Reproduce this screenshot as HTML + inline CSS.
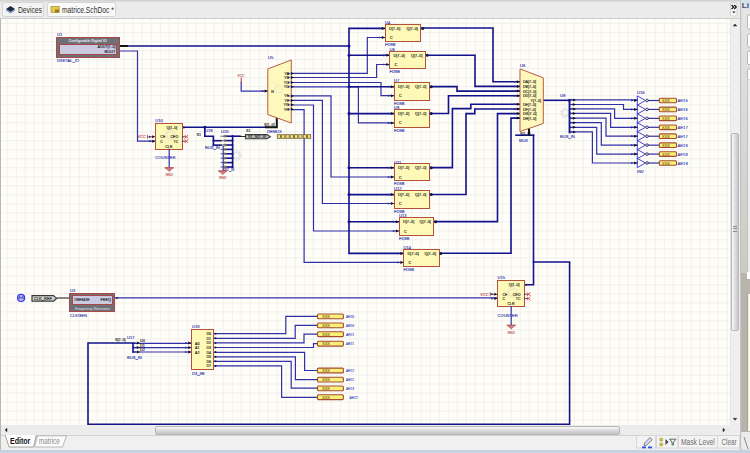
<!DOCTYPE html>
<html><head><meta charset="utf-8">
<style>
html,body{margin:0;padding:0;}
body{width:750px;height:453px;overflow:hidden;position:relative;background:#ececec;font-family:"Liberation Sans",sans-serif;}
.abs{position:absolute;}
.btn{position:absolute;box-sizing:border-box;border:1px solid #cfcfcf;border-radius:2px;background:#f6f6f6;font-size:10.5px;color:#2a2a2a;line-height:12px;}
</style></head><body>
<svg class="abs" style="left:0;top:0" width="740" height="19" viewBox="0 0 740 19" font-family="Liberation Sans, sans-serif">
<rect x="0" y="0" width="740" height="19" fill="#ebebeb"/>
<rect x="0" y="0" width="740" height="1.5" fill="#d2d2d2"/>
<rect x="0" y="18" width="740" height="1" fill="#cdcdcd"/>
<rect x="2.5" y="2.5" width="41" height="14" rx="2" fill="#f3f3f3" stroke="#d4d4d4" stroke-width="1"/>
<path d="M6,9 L10.5,6 L15,9 L10.5,12 Z" fill="#1e2a44"/>
<path d="M6,9 L6,10.5 L10.5,13.5 L15,10.5 L15,9 L10.5,12 Z" fill="#7a96c8"/>
<text x="18" y="12.8" font-size="8.2" fill="#2c2c2c" textLength="24" lengthAdjust="spacingAndGlyphs">Devices</text>
<rect x="47.5" y="2.5" width="68" height="14" rx="2" fill="#fafafa" stroke="#d4d4d4" stroke-width="1"/>
<rect x="51" y="6.5" width="8.2" height="6" fill="#e8c840" stroke="#a08028" stroke-width="0.6"/>
<rect x="55" y="9.5" width="4" height="3" fill="#9a7a20"/>
<text x="62" y="12.8" font-size="8.2" fill="#2c2c2c" textLength="51.8" lengthAdjust="spacingAndGlyphs">matrice.SchDoc *</text>
<rect x="730.5" y="2.5" width="6.5" height="13.5" rx="1.5" fill="#f7f7f7" stroke="#d4d4d4" stroke-width="1"/>
<path d="M731.6,5 L733.6,7 L731.6,9 M734.2,5 L736.2,7 L734.2,9" fill="none" stroke="#111" stroke-width="1.2"/>
<path d="M732.2,11.5 h3.4 l-1.7,1.8 z" fill="#222"/>
</svg>
<svg class="abs" style="left:0;top:0" width="750" height="453" viewBox="0 0 750 453" font-family="Liberation Sans, sans-serif">
<rect x="1" y="19" width="729" height="406" fill="#fffdf8"/>
<rect x="6.75" y="19" width="1.1" height="406" fill="#f2f1ed"/><rect x="15.75" y="19" width="1.1" height="406" fill="#f2f1ed"/><rect x="24.75" y="19" width="1.1" height="406" fill="#f2f1ed"/><rect x="33.75" y="19" width="1.1" height="406" fill="#f2f1ed"/><rect x="42.75" y="19" width="1.1" height="406" fill="#f2f1ed"/><rect x="51.75" y="19" width="1.1" height="406" fill="#f2f1ed"/><rect x="60.75" y="19" width="1.1" height="406" fill="#f2f1ed"/><rect x="69.75" y="19" width="1.1" height="406" fill="#f2f1ed"/><rect x="78.75" y="19" width="1.1" height="406" fill="#f2f1ed"/><rect x="87.75" y="19" width="1.1" height="406" fill="#f2f1ed"/><rect x="96.75" y="19" width="1.1" height="406" fill="#f2f1ed"/><rect x="105.75" y="19" width="1.1" height="406" fill="#f2f1ed"/><rect x="114.75" y="19" width="1.1" height="406" fill="#f2f1ed"/><rect x="123.75" y="19" width="1.1" height="406" fill="#f2f1ed"/><rect x="132.75" y="19" width="1.1" height="406" fill="#f2f1ed"/><rect x="141.75" y="19" width="1.1" height="406" fill="#f2f1ed"/><rect x="150.75" y="19" width="1.1" height="406" fill="#f2f1ed"/><rect x="159.75" y="19" width="1.1" height="406" fill="#f2f1ed"/><rect x="168.75" y="19" width="1.1" height="406" fill="#f2f1ed"/><rect x="177.75" y="19" width="1.1" height="406" fill="#f2f1ed"/><rect x="186.75" y="19" width="1.1" height="406" fill="#f2f1ed"/><rect x="195.75" y="19" width="1.1" height="406" fill="#f2f1ed"/><rect x="204.75" y="19" width="1.1" height="406" fill="#f2f1ed"/><rect x="213.75" y="19" width="1.1" height="406" fill="#f2f1ed"/><rect x="222.75" y="19" width="1.1" height="406" fill="#f2f1ed"/><rect x="231.75" y="19" width="1.1" height="406" fill="#f2f1ed"/><rect x="240.75" y="19" width="1.1" height="406" fill="#f2f1ed"/><rect x="249.75" y="19" width="1.1" height="406" fill="#f2f1ed"/><rect x="258.75" y="19" width="1.1" height="406" fill="#f2f1ed"/><rect x="267.75" y="19" width="1.1" height="406" fill="#f2f1ed"/><rect x="276.75" y="19" width="1.1" height="406" fill="#f2f1ed"/><rect x="285.75" y="19" width="1.1" height="406" fill="#f2f1ed"/><rect x="294.75" y="19" width="1.1" height="406" fill="#f2f1ed"/><rect x="303.75" y="19" width="1.1" height="406" fill="#f2f1ed"/><rect x="312.75" y="19" width="1.1" height="406" fill="#f2f1ed"/><rect x="321.75" y="19" width="1.1" height="406" fill="#f2f1ed"/><rect x="330.75" y="19" width="1.1" height="406" fill="#f2f1ed"/><rect x="339.75" y="19" width="1.1" height="406" fill="#f2f1ed"/><rect x="348.75" y="19" width="1.1" height="406" fill="#f2f1ed"/><rect x="357.75" y="19" width="1.1" height="406" fill="#f2f1ed"/><rect x="366.75" y="19" width="1.1" height="406" fill="#f2f1ed"/><rect x="375.75" y="19" width="1.1" height="406" fill="#f2f1ed"/><rect x="384.75" y="19" width="1.1" height="406" fill="#f2f1ed"/><rect x="393.75" y="19" width="1.1" height="406" fill="#f2f1ed"/><rect x="402.75" y="19" width="1.1" height="406" fill="#f2f1ed"/><rect x="411.75" y="19" width="1.1" height="406" fill="#f2f1ed"/><rect x="420.75" y="19" width="1.1" height="406" fill="#f2f1ed"/><rect x="429.75" y="19" width="1.1" height="406" fill="#f2f1ed"/><rect x="438.75" y="19" width="1.1" height="406" fill="#f2f1ed"/><rect x="447.75" y="19" width="1.1" height="406" fill="#f2f1ed"/><rect x="456.75" y="19" width="1.1" height="406" fill="#f2f1ed"/><rect x="465.75" y="19" width="1.1" height="406" fill="#f2f1ed"/><rect x="474.75" y="19" width="1.1" height="406" fill="#f2f1ed"/><rect x="483.75" y="19" width="1.1" height="406" fill="#f2f1ed"/><rect x="492.75" y="19" width="1.1" height="406" fill="#f2f1ed"/><rect x="501.75" y="19" width="1.1" height="406" fill="#f2f1ed"/><rect x="510.75" y="19" width="1.1" height="406" fill="#f2f1ed"/><rect x="519.75" y="19" width="1.1" height="406" fill="#f2f1ed"/><rect x="528.75" y="19" width="1.1" height="406" fill="#f2f1ed"/><rect x="537.75" y="19" width="1.1" height="406" fill="#f2f1ed"/><rect x="546.75" y="19" width="1.1" height="406" fill="#f2f1ed"/><rect x="555.75" y="19" width="1.1" height="406" fill="#f2f1ed"/><rect x="564.75" y="19" width="1.1" height="406" fill="#f2f1ed"/><rect x="573.75" y="19" width="1.1" height="406" fill="#f2f1ed"/><rect x="582.75" y="19" width="1.1" height="406" fill="#f2f1ed"/><rect x="591.75" y="19" width="1.1" height="406" fill="#f2f1ed"/><rect x="600.75" y="19" width="1.1" height="406" fill="#f2f1ed"/><rect x="609.75" y="19" width="1.1" height="406" fill="#f2f1ed"/><rect x="618.75" y="19" width="1.1" height="406" fill="#f2f1ed"/><rect x="627.75" y="19" width="1.1" height="406" fill="#f2f1ed"/><rect x="636.75" y="19" width="1.1" height="406" fill="#f2f1ed"/><rect x="645.75" y="19" width="1.1" height="406" fill="#f2f1ed"/><rect x="654.75" y="19" width="1.1" height="406" fill="#f2f1ed"/><rect x="663.75" y="19" width="1.1" height="406" fill="#f2f1ed"/><rect x="672.75" y="19" width="1.1" height="406" fill="#f2f1ed"/><rect x="681.75" y="19" width="1.1" height="406" fill="#f2f1ed"/><rect x="690.75" y="19" width="1.1" height="406" fill="#f2f1ed"/><rect x="699.75" y="19" width="1.1" height="406" fill="#f2f1ed"/><rect x="708.75" y="19" width="1.1" height="406" fill="#f2f1ed"/><rect x="717.75" y="19" width="1.1" height="406" fill="#f2f1ed"/><rect x="726.75" y="19" width="1.1" height="406" fill="#f2f1ed"/><rect x="1" y="23.00" width="729" height="1.1" fill="#f2f1ed"/><rect x="1" y="32.01" width="729" height="1.1" fill="#f2f1ed"/><rect x="1" y="41.02" width="729" height="1.1" fill="#f2f1ed"/><rect x="1" y="50.03" width="729" height="1.1" fill="#f2f1ed"/><rect x="1" y="59.04" width="729" height="1.1" fill="#f2f1ed"/><rect x="1" y="68.05" width="729" height="1.1" fill="#f2f1ed"/><rect x="1" y="77.07" width="729" height="1.1" fill="#f2f1ed"/><rect x="1" y="86.08" width="729" height="1.1" fill="#f2f1ed"/><rect x="1" y="95.09" width="729" height="1.1" fill="#f2f1ed"/><rect x="1" y="104.10" width="729" height="1.1" fill="#f2f1ed"/><rect x="1" y="113.11" width="729" height="1.1" fill="#f2f1ed"/><rect x="1" y="122.12" width="729" height="1.1" fill="#f2f1ed"/><rect x="1" y="131.13" width="729" height="1.1" fill="#f2f1ed"/><rect x="1" y="140.14" width="729" height="1.1" fill="#f2f1ed"/><rect x="1" y="149.15" width="729" height="1.1" fill="#f2f1ed"/><rect x="1" y="158.16" width="729" height="1.1" fill="#f2f1ed"/><rect x="1" y="167.18" width="729" height="1.1" fill="#f2f1ed"/><rect x="1" y="176.19" width="729" height="1.1" fill="#f2f1ed"/><rect x="1" y="185.20" width="729" height="1.1" fill="#f2f1ed"/><rect x="1" y="194.21" width="729" height="1.1" fill="#f2f1ed"/><rect x="1" y="203.22" width="729" height="1.1" fill="#f2f1ed"/><rect x="1" y="212.23" width="729" height="1.1" fill="#f2f1ed"/><rect x="1" y="221.24" width="729" height="1.1" fill="#f2f1ed"/><rect x="1" y="230.25" width="729" height="1.1" fill="#f2f1ed"/><rect x="1" y="239.26" width="729" height="1.1" fill="#f2f1ed"/><rect x="1" y="248.27" width="729" height="1.1" fill="#f2f1ed"/><rect x="1" y="257.29" width="729" height="1.1" fill="#f2f1ed"/><rect x="1" y="266.30" width="729" height="1.1" fill="#f2f1ed"/><rect x="1" y="275.31" width="729" height="1.1" fill="#f2f1ed"/><rect x="1" y="284.32" width="729" height="1.1" fill="#f2f1ed"/><rect x="1" y="293.33" width="729" height="1.1" fill="#f2f1ed"/><rect x="1" y="302.34" width="729" height="1.1" fill="#f2f1ed"/><rect x="1" y="311.35" width="729" height="1.1" fill="#f2f1ed"/><rect x="1" y="320.36" width="729" height="1.1" fill="#f2f1ed"/><rect x="1" y="329.37" width="729" height="1.1" fill="#f2f1ed"/><rect x="1" y="338.38" width="729" height="1.1" fill="#f2f1ed"/><rect x="1" y="347.40" width="729" height="1.1" fill="#f2f1ed"/><rect x="1" y="356.41" width="729" height="1.1" fill="#f2f1ed"/><rect x="1" y="365.42" width="729" height="1.1" fill="#f2f1ed"/><rect x="1" y="374.43" width="729" height="1.1" fill="#f2f1ed"/><rect x="1" y="383.44" width="729" height="1.1" fill="#f2f1ed"/><rect x="1" y="392.45" width="729" height="1.1" fill="#f2f1ed"/><rect x="1" y="401.46" width="729" height="1.1" fill="#f2f1ed"/><rect x="1" y="410.47" width="729" height="1.1" fill="#f2f1ed"/><rect x="1" y="419.48" width="729" height="1.1" fill="#f2f1ed"/>
<circle cx="565.5" cy="113" r="4.2" fill="none" stroke="#e2e2de" stroke-width="2.4" stroke-dasharray="1.6 1.1"/><circle cx="565.5" cy="113" r="3.0" fill="none" stroke="#e2e2de" stroke-width="1.2"/><circle cx="236.5" cy="155.5" r="4.2" fill="none" stroke="#e2e2de" stroke-width="2.4" stroke-dasharray="1.6 1.1"/><circle cx="236.5" cy="155.5" r="3.0" fill="none" stroke="#e2e2de" stroke-width="1.2"/><polyline points="119,51 137.5,51 137.5,141.2 155,141.2" fill="none" stroke="#3030a8" stroke-width="1.2" stroke-linejoin="miter" stroke-linecap="square"/><polyline points="241.2,82.5 241.2,91.2 267.5,91.2" fill="none" stroke="#3030a8" stroke-width="1.2" stroke-linejoin="miter" stroke-linecap="square"/><polyline points="291.3,73.4 367.3,73.4 367.3,37.5 385,37.5" fill="none" stroke="#3030a8" stroke-width="1.2" stroke-linejoin="miter" stroke-linecap="square"/><polyline points="291.3,77.5 376.6,77.5 376.6,64.5 389.5,64.5" fill="none" stroke="#3030a8" stroke-width="1.2" stroke-linejoin="miter" stroke-linecap="square"/><polyline points="291.3,82.5 381,82.5 381,95.7 394,95.7" fill="none" stroke="#3030a8" stroke-width="1.2" stroke-linejoin="miter" stroke-linecap="square"/><polyline points="291.3,86.8 358.4,86.8 358.4,122.9 394,122.9" fill="none" stroke="#3030a8" stroke-width="1.2" stroke-linejoin="miter" stroke-linecap="square"/><polyline points="291.3,95.9 331,95.9 331,177 394,177" fill="none" stroke="#3030a8" stroke-width="1.2" stroke-linejoin="miter" stroke-linecap="square"/><polyline points="291.3,100.4 322.4,100.4 322.4,203.5 394,203.5" fill="none" stroke="#3030a8" stroke-width="1.2" stroke-linejoin="miter" stroke-linecap="square"/><polyline points="291.3,105.0 313.5,105.0 313.5,231 399,231" fill="none" stroke="#3030a8" stroke-width="1.2" stroke-linejoin="miter" stroke-linecap="square"/><polyline points="291.3,109.6 304.1,109.6 304.1,262.4 403.6,262.4" fill="none" stroke="#3030a8" stroke-width="1.2" stroke-linejoin="miter" stroke-linecap="square"/><polyline points="57,298 70,298" fill="none" stroke="#141414" stroke-width="1.0" stroke-linejoin="miter" stroke-linecap="square"/><polyline points="115,297.9 497.5,297.9" fill="none" stroke="#3030a8" stroke-width="1.2" stroke-linejoin="miter" stroke-linecap="square"/><polyline points="133,343.3 191.4,343.3" fill="none" stroke="#3030a8" stroke-width="1.2" stroke-linejoin="miter" stroke-linecap="square"/><polyline points="133,347.7 191.4,347.7" fill="none" stroke="#3030a8" stroke-width="1.2" stroke-linejoin="miter" stroke-linecap="square"/><polyline points="133,352 191.4,352" fill="none" stroke="#3030a8" stroke-width="1.2" stroke-linejoin="miter" stroke-linecap="square"/><polyline points="214,333.7 285.8,333.7 285.8,316.4 317.5,316.4" fill="none" stroke="#3030a8" stroke-width="1.2" stroke-linejoin="miter" stroke-linecap="square"/><polyline points="214,338.3 295.2,338.3 295.2,325.4 317.5,325.4" fill="none" stroke="#3030a8" stroke-width="1.2" stroke-linejoin="miter" stroke-linecap="square"/><polyline points="214,342.9 304,342.9 304,334.2 317.5,334.2" fill="none" stroke="#3030a8" stroke-width="1.2" stroke-linejoin="miter" stroke-linecap="square"/><polyline points="214,347.5 313.5,347.5 313.5,343.7 317.5,343.7" fill="none" stroke="#3030a8" stroke-width="1.2" stroke-linejoin="miter" stroke-linecap="square"/><polyline points="214,352.3 304.6,352.3 304.6,370.5 317.5,370.5" fill="none" stroke="#3030a8" stroke-width="1.2" stroke-linejoin="miter" stroke-linecap="square"/><polyline points="214,356.9 295.4,356.9 295.4,379.6 317.5,379.6" fill="none" stroke="#3030a8" stroke-width="1.2" stroke-linejoin="miter" stroke-linecap="square"/><polyline points="214,361.4 291.2,361.4 291.2,388.2 317.5,388.2" fill="none" stroke="#3030a8" stroke-width="1.2" stroke-linejoin="miter" stroke-linecap="square"/><polyline points="214,365.9 281.6,365.9 281.6,397.4 317.5,397.4" fill="none" stroke="#3030a8" stroke-width="1.2" stroke-linejoin="miter" stroke-linecap="square"/><polyline points="569.6,99.9 637.3,99.9" fill="none" stroke="#3030a8" stroke-width="1.2" stroke-linejoin="miter" stroke-linecap="square"/><polyline points="648.5,100.5 659.3,100.5" fill="none" stroke="#3030a8" stroke-width="1.2" stroke-linejoin="miter" stroke-linecap="square"/><polyline points="569.6,104.5 623.5,104.5 623.5,109.43 637.3,109.43" fill="none" stroke="#3030a8" stroke-width="1.2" stroke-linejoin="miter" stroke-linecap="square"/><polyline points="648.5,109.43 659.3,109.43" fill="none" stroke="#3030a8" stroke-width="1.2" stroke-linejoin="miter" stroke-linecap="square"/><polyline points="569.6,108.9 614.6,108.9 614.6,118.36 637.3,118.36" fill="none" stroke="#3030a8" stroke-width="1.2" stroke-linejoin="miter" stroke-linecap="square"/><polyline points="648.5,118.36 659.3,118.36" fill="none" stroke="#3030a8" stroke-width="1.2" stroke-linejoin="miter" stroke-linecap="square"/><polyline points="569.6,113.4 610.6,113.4 610.6,127.28999999999999 637.3,127.28999999999999" fill="none" stroke="#3030a8" stroke-width="1.2" stroke-linejoin="miter" stroke-linecap="square"/><polyline points="648.5,127.28999999999999 659.3,127.28999999999999" fill="none" stroke="#3030a8" stroke-width="1.2" stroke-linejoin="miter" stroke-linecap="square"/><polyline points="569.6,118.2 606,118.2 606,136.22 637.3,136.22" fill="none" stroke="#3030a8" stroke-width="1.2" stroke-linejoin="miter" stroke-linecap="square"/><polyline points="648.5,136.22 659.3,136.22" fill="none" stroke="#3030a8" stroke-width="1.2" stroke-linejoin="miter" stroke-linecap="square"/><polyline points="569.6,122.7 601.3,122.7 601.3,145.15 637.3,145.15" fill="none" stroke="#3030a8" stroke-width="1.2" stroke-linejoin="miter" stroke-linecap="square"/><polyline points="648.5,145.15 659.3,145.15" fill="none" stroke="#3030a8" stroke-width="1.2" stroke-linejoin="miter" stroke-linecap="square"/><polyline points="569.6,127.3 596.7,127.3 596.7,154.07999999999998 637.3,154.07999999999998" fill="none" stroke="#3030a8" stroke-width="1.2" stroke-linejoin="miter" stroke-linecap="square"/><polyline points="648.5,154.07999999999998 659.3,154.07999999999998" fill="none" stroke="#3030a8" stroke-width="1.2" stroke-linejoin="miter" stroke-linecap="square"/><polyline points="569.6,131.9 592.4,131.9 592.4,163.01 637.3,163.01" fill="none" stroke="#3030a8" stroke-width="1.2" stroke-linejoin="miter" stroke-linecap="square"/><polyline points="648.5,163.01 659.3,163.01" fill="none" stroke="#3030a8" stroke-width="1.2" stroke-linejoin="miter" stroke-linecap="square"/><polyline points="516,135.2 533.5,135.2" fill="none" stroke="#12128c" stroke-width="1.6" stroke-linejoin="miter" stroke-linecap="square"/><polyline points="119,46 128.5,46" fill="none" stroke="#141414" stroke-width="2.0" stroke-linejoin="miter" stroke-linecap="butt"/><polyline points="128.5,46 349,46" fill="none" stroke="#12128c" stroke-width="1.6" stroke-linejoin="miter" stroke-linecap="butt"/><polyline points="385,28.4 349,28.4 349,253.4 403.6,253.4" fill="none" stroke="#12128c" stroke-width="1.6" stroke-linejoin="miter" stroke-linecap="square"/><polyline points="349,55.3 389.5,55.3" fill="none" stroke="#12128c" stroke-width="1.6" stroke-linejoin="miter" stroke-linecap="square"/><polyline points="349,86.7 394,86.7" fill="none" stroke="#12128c" stroke-width="1.6" stroke-linejoin="miter" stroke-linecap="square"/><polyline points="349,113.6 394,113.6" fill="none" stroke="#12128c" stroke-width="1.6" stroke-linejoin="miter" stroke-linecap="square"/><polyline points="349,167.7 394,167.7" fill="none" stroke="#12128c" stroke-width="1.6" stroke-linejoin="miter" stroke-linecap="square"/><polyline points="349,194.6 394,194.6" fill="none" stroke="#12128c" stroke-width="1.6" stroke-linejoin="miter" stroke-linecap="square"/><polyline points="349,221.7 399,221.7" fill="none" stroke="#12128c" stroke-width="1.6" stroke-linejoin="miter" stroke-linecap="square"/><circle cx="349" cy="46" r="1.5" fill="#12128c"/><circle cx="349" cy="55.3" r="1.5" fill="#12128c"/><circle cx="349" cy="86.7" r="1.5" fill="#12128c"/><circle cx="349" cy="113.6" r="1.5" fill="#12128c"/><circle cx="349" cy="167.7" r="1.5" fill="#12128c"/><circle cx="349" cy="194.6" r="1.5" fill="#12128c"/><circle cx="349" cy="221.7" r="1.5" fill="#12128c"/><polyline points="421,28.0 493,28.0 493,81.8 520,81.8" fill="none" stroke="#12128c" stroke-width="1.6" stroke-linejoin="miter" stroke-linecap="square"/><polyline points="425.5,55.3 475,55.3 475,86.4 520,86.4" fill="none" stroke="#12128c" stroke-width="1.6" stroke-linejoin="miter" stroke-linecap="square"/><polyline points="430,86.6 457,86.6 457,91.1 520,91.1" fill="none" stroke="#12128c" stroke-width="1.6" stroke-linejoin="miter" stroke-linecap="square"/><polyline points="430,113.5 448.5,113.5 448.5,95.7 520,95.7" fill="none" stroke="#12128c" stroke-width="1.6" stroke-linejoin="miter" stroke-linecap="square"/><polyline points="430,167.6 452.4,167.6 452.4,108.6 470.8,108.6 470.8,104.2 520,104.2" fill="none" stroke="#12128c" stroke-width="1.6" stroke-linejoin="miter" stroke-linecap="square"/><polyline points="430,194.5 466,194.5 466,113.6 474.8,113.6 474.8,109 520,109" fill="none" stroke="#12128c" stroke-width="1.6" stroke-linejoin="miter" stroke-linecap="square"/><polyline points="434,221.6 497.5,221.6 497.5,113.6 520,113.6" fill="none" stroke="#12128c" stroke-width="1.6" stroke-linejoin="miter" stroke-linecap="square"/><polyline points="439,253.2 511,253.2 511,118.1 520,118.1" fill="none" stroke="#12128c" stroke-width="1.6" stroke-linejoin="miter" stroke-linecap="square"/><polyline points="543.3,100.3 569.5,100.3" fill="none" stroke="#12128c" stroke-width="1.6" stroke-linejoin="miter" stroke-linecap="square"/><polyline points="569.5,100 569.5,132.5" fill="none" stroke="#12128c" stroke-width="1.8" stroke-linejoin="miter" stroke-linecap="square"/><circle cx="569.5" cy="100.3" r="1.5" fill="#12128c"/><polyline points="529,123.5 529,135.5" fill="none" stroke="#141414" stroke-width="2.0" stroke-linejoin="miter" stroke-linecap="butt"/><polyline points="533.5,135.2 533.5,284.8 524.5,284.8" fill="none" stroke="#12128c" stroke-width="1.6" stroke-linejoin="miter" stroke-linecap="square"/><polyline points="533.5,262 569.6,262 569.6,424.2 88,424.2 88,343 133,343 133,352" fill="none" stroke="#12128c" stroke-width="1.6" stroke-linejoin="miter" stroke-linecap="square"/><polyline points="182,127.3 266,127.3" fill="none" stroke="#12128c" stroke-width="1.6" stroke-linejoin="miter" stroke-linecap="square"/><polyline points="266,127.3 276.8,127.3 276.8,119" fill="none" stroke="#141414" stroke-width="2.0" stroke-linejoin="miter" stroke-linecap="square"/><circle cx="204.8" cy="127.3" r="1.5" fill="#12128c"/><polyline points="204.8,127.3 204.8,136.2 213.4,136.2 213.4,145.1" fill="none" stroke="#12128c" stroke-width="1.6" stroke-linejoin="miter" stroke-linecap="square"/><polyline points="213.4,140.7 221,140.7" fill="none" stroke="#12128c" stroke-width="1.6" stroke-linejoin="miter" stroke-linecap="square"/><polyline points="213.4,145.1 221,145.1" fill="none" stroke="#12128c" stroke-width="1.6" stroke-linejoin="miter" stroke-linecap="square"/><polyline points="232.6,136.2 232.6,167.4" fill="none" stroke="#12128c" stroke-width="1.6" stroke-linejoin="miter" stroke-linecap="square"/><polyline points="227,136.2 232.6,136.2" fill="none" stroke="#12128c" stroke-width="1.6" stroke-linejoin="miter" stroke-linecap="square"/><polyline points="227,140.6 232.6,140.6" fill="none" stroke="#12128c" stroke-width="1.6" stroke-linejoin="miter" stroke-linecap="square"/><polyline points="227,145.0 232.6,145.0" fill="none" stroke="#12128c" stroke-width="1.6" stroke-linejoin="miter" stroke-linecap="square"/><polyline points="227,149.39999999999998 232.6,149.39999999999998" fill="none" stroke="#12128c" stroke-width="1.6" stroke-linejoin="miter" stroke-linecap="square"/><polyline points="227,153.79999999999998 232.6,153.79999999999998" fill="none" stroke="#12128c" stroke-width="1.6" stroke-linejoin="miter" stroke-linecap="square"/><polyline points="227,158.2 232.6,158.2" fill="none" stroke="#12128c" stroke-width="1.6" stroke-linejoin="miter" stroke-linecap="square"/><polyline points="227,162.6 232.6,162.6" fill="none" stroke="#12128c" stroke-width="1.6" stroke-linejoin="miter" stroke-linecap="square"/><polyline points="227,167.0 232.6,167.0" fill="none" stroke="#12128c" stroke-width="1.6" stroke-linejoin="miter" stroke-linecap="square"/><polyline points="232.6,136.2 240,136.2" fill="none" stroke="#12128c" stroke-width="1.6" stroke-linejoin="miter" stroke-linecap="square"/><rect x="56.5" y="37.5" width="63.0" height="20.0" fill="#6f6f75" stroke="#a84848" stroke-width="1.0" /><rect x="59.5" y="44.5" width="57.0" height="10.0" fill="#cacae0" stroke="#a84848" stroke-width="1.0" /><text x="68.8" y="42.4" font-size="4.0" fill="#dcdce4" stroke="#dcdce4" stroke-width="0.12" text-anchor="start" font-weight="bold" textLength="37.8" lengthAdjust="spacingAndGlyphs">Configurable Digital IO</text><text x="97.6" y="47.8" font-size="4.0" fill="#151520" stroke="#151520" stroke-width="0.12" text-anchor="start" font-weight="normal" textLength="18" lengthAdjust="spacingAndGlyphs">AOUT[7..0]</text><text x="115.5" y="52.6" font-size="4.0" fill="#151520" stroke="#151520" stroke-width="0.12" text-anchor="end" font-weight="normal" >BOUT</text><text x="57" y="36" font-size="4.1" fill="#1e2aa8" stroke="#1e2aa8" stroke-width="0.1" text-anchor="start" font-weight="normal" >U1</text><text x="57" y="61.5" font-size="4.1" fill="#1e2aa8" stroke="#1e2aa8" stroke-width="0.1" text-anchor="start" font-weight="normal" >DIGITAL_IO</text><polygon points="267.8,68.9 291.3,60 291.3,123 267.8,114.6" fill="#fff8bc" stroke="#b85c44" stroke-width="1"/><circle cx="278.5" cy="89" r="3.6" fill="none" stroke="#ede9c6" stroke-width="2.2" stroke-dasharray="1.5 1"/><text x="268" y="58.5" font-size="4.1" fill="#1e2aa8" stroke="#1e2aa8" stroke-width="0.1" text-anchor="start" font-weight="normal" >U5</text><text x="289" y="74.9" font-size="3.8" fill="#141414" stroke="#141414" stroke-width="0.12" text-anchor="end" font-weight="normal" >YA</text><path d="M290.8,71.9 L294,73.4 L290.8,74.9 Z" fill="#101018"/><path d="M287.8,72.30000000000001 L290.4,73.4 L287.8,74.5 Z" fill="#2a2aa8"/><text x="289" y="79.0" font-size="3.8" fill="#141414" stroke="#141414" stroke-width="0.12" text-anchor="end" font-weight="normal" >YB</text><path d="M290.8,76.0 L294,77.5 L290.8,79.0 Z" fill="#101018"/><path d="M287.8,76.4 L290.4,77.5 L287.8,78.6 Z" fill="#2a2aa8"/><text x="289" y="84.0" font-size="3.8" fill="#141414" stroke="#141414" stroke-width="0.12" text-anchor="end" font-weight="normal" >YC</text><path d="M290.8,81.0 L294,82.5 L290.8,84.0 Z" fill="#101018"/><path d="M287.8,81.4 L290.4,82.5 L287.8,83.6 Z" fill="#2a2aa8"/><text x="289" y="88.3" font-size="3.8" fill="#141414" stroke="#141414" stroke-width="0.12" text-anchor="end" font-weight="normal" >YD</text><path d="M290.8,85.3 L294,86.8 L290.8,88.3 Z" fill="#101018"/><path d="M287.8,85.7 L290.4,86.8 L287.8,87.89999999999999 Z" fill="#2a2aa8"/><text x="289" y="97.4" font-size="3.8" fill="#141414" stroke="#141414" stroke-width="0.12" text-anchor="end" font-weight="normal" >YE</text><path d="M290.8,94.4 L294,95.9 L290.8,97.4 Z" fill="#101018"/><path d="M287.8,94.80000000000001 L290.4,95.9 L287.8,97.0 Z" fill="#2a2aa8"/><text x="289" y="101.9" font-size="3.8" fill="#141414" stroke="#141414" stroke-width="0.12" text-anchor="end" font-weight="normal" >YF</text><path d="M290.8,98.9 L294,100.4 L290.8,101.9 Z" fill="#101018"/><path d="M287.8,99.30000000000001 L290.4,100.4 L287.8,101.5 Z" fill="#2a2aa8"/><text x="289" y="106.3" font-size="3.8" fill="#141414" stroke="#141414" stroke-width="0.12" text-anchor="end" font-weight="normal" >YG</text><path d="M290.8,103.3 L294,104.8 L290.8,106.3 Z" fill="#101018"/><path d="M287.8,103.7 L290.4,104.8 L287.8,105.89999999999999 Z" fill="#2a2aa8"/><text x="289" y="110.7" font-size="3.8" fill="#141414" stroke="#141414" stroke-width="0.12" text-anchor="end" font-weight="normal" >YH</text><path d="M290.8,107.7 L294,109.2 L290.8,110.7 Z" fill="#101018"/><path d="M287.8,108.10000000000001 L290.4,109.2 L287.8,110.3 Z" fill="#2a2aa8"/><text x="271" y="92.5" font-size="3.8" fill="#141414" stroke="#141414" stroke-width="0.12" text-anchor="start" font-weight="normal" >G</text><path d="M264.6,89.5 L267.8,91 L264.6,92.5 Z" fill="#101018"/><path d="M261.6,89.9 L264.2,91 L261.6,92.1 Z" fill="#2a2aa8"/><text x="267" y="133" font-size="4.1" fill="#1e2aa8" stroke="#1e2aa8" stroke-width="0.1" text-anchor="start" font-weight="normal" >DEMUX</text><text x="264" y="125.5" font-size="3.6" fill="#141414" stroke="#141414" stroke-width="0.12" text-anchor="start" font-weight="normal" >S[1..0]</text><rect x="385.5" y="24.5" width="35.0" height="17.0" fill="#fff9b8" stroke="#b4503c" stroke-width="1.0" /><text x="389" y="29.9" font-size="3.8" fill="#141414" stroke="#141414" stroke-width="0.12" text-anchor="start" font-weight="normal" >D[7..0]</text><text x="417.9" y="29.9" font-size="3.8" fill="#141414" stroke="#141414" stroke-width="0.12" text-anchor="end" font-weight="normal" >Q[7..0]</text><text x="390" y="39.0" font-size="3.8" fill="#141414" stroke="#141414" stroke-width="0.12" text-anchor="start" font-weight="normal" >C</text><path d="M381.8,26.9 L385,28.4 L381.8,29.9 Z" fill="#101018"/><path d="M378.8,27.299999999999997 L381.4,28.4 L378.8,29.5 Z" fill="#2a2aa8"/><path d="M381.8,36.0 L385,37.5 L381.8,39.0 Z" fill="#101018"/><path d="M378.8,36.4 L381.4,37.5 L378.8,38.6 Z" fill="#2a2aa8"/><circle cx="422.7" cy="28.4" r="1.5" fill="#141450"/><text x="385" y="23.7" font-size="4.1" fill="#1e2aa8" stroke="#1e2aa8" stroke-width="0.1" text-anchor="start" font-weight="normal" >U4</text><text x="385" y="46.3" font-size="4.1" fill="#1e2aa8" stroke="#1e2aa8" stroke-width="0.1" text-anchor="start" font-weight="normal" >FD8B</text><rect x="389.5" y="51.5" width="36.0" height="17.0" fill="#fff9b8" stroke="#b4503c" stroke-width="1.0" /><text x="393.5" y="56.8" font-size="3.8" fill="#141414" stroke="#141414" stroke-width="0.12" text-anchor="start" font-weight="normal" >D[7..0]</text><text x="422.5" y="56.8" font-size="3.8" fill="#141414" stroke="#141414" stroke-width="0.12" text-anchor="end" font-weight="normal" >Q[7..0]</text><text x="394.5" y="66.0" font-size="3.8" fill="#141414" stroke="#141414" stroke-width="0.12" text-anchor="start" font-weight="normal" >C</text><path d="M386.3,53.8 L389.5,55.3 L386.3,56.8 Z" fill="#101018"/><path d="M383.3,54.199999999999996 L385.9,55.3 L383.3,56.4 Z" fill="#2a2aa8"/><path d="M386.3,63.0 L389.5,64.5 L386.3,66.0 Z" fill="#101018"/><path d="M383.3,63.4 L385.9,64.5 L383.3,65.6 Z" fill="#2a2aa8"/><circle cx="427.3" cy="55.3" r="1.5" fill="#141450"/><text x="389.5" y="50.7" font-size="4.1" fill="#1e2aa8" stroke="#1e2aa8" stroke-width="0.1" text-anchor="start" font-weight="normal" >U6</text><text x="389.5" y="73.1" font-size="4.1" fill="#1e2aa8" stroke="#1e2aa8" stroke-width="0.1" text-anchor="start" font-weight="normal" >FD8B</text><rect x="394.5" y="82.5" width="35.0" height="18.0" fill="#fff9b8" stroke="#b4503c" stroke-width="1.0" /><text x="398" y="88.2" font-size="3.8" fill="#141414" stroke="#141414" stroke-width="0.12" text-anchor="start" font-weight="normal" >D[7..0]</text><text x="426.4" y="88.2" font-size="3.8" fill="#141414" stroke="#141414" stroke-width="0.12" text-anchor="end" font-weight="normal" >Q[7..0]</text><text x="399" y="97.2" font-size="3.8" fill="#141414" stroke="#141414" stroke-width="0.12" text-anchor="start" font-weight="normal" >C</text><path d="M390.8,85.2 L394,86.7 L390.8,88.2 Z" fill="#101018"/><path d="M387.8,85.60000000000001 L390.4,86.7 L387.8,87.8 Z" fill="#2a2aa8"/><path d="M390.8,94.2 L394,95.7 L390.8,97.2 Z" fill="#101018"/><path d="M387.8,94.60000000000001 L390.4,95.7 L387.8,96.8 Z" fill="#2a2aa8"/><circle cx="431.2" cy="86.7" r="1.5" fill="#141450"/><text x="394" y="82.2" font-size="4.1" fill="#1e2aa8" stroke="#1e2aa8" stroke-width="0.1" text-anchor="start" font-weight="normal" >U7</text><text x="394" y="104.8" font-size="4.1" fill="#1e2aa8" stroke="#1e2aa8" stroke-width="0.1" text-anchor="start" font-weight="normal" >FD8B</text><rect x="394.5" y="109.5" width="35.0" height="18.0" fill="#fff9b8" stroke="#b4503c" stroke-width="1.0" /><text x="398" y="115.1" font-size="3.8" fill="#141414" stroke="#141414" stroke-width="0.12" text-anchor="start" font-weight="normal" >D[7..0]</text><text x="426.4" y="115.1" font-size="3.8" fill="#141414" stroke="#141414" stroke-width="0.12" text-anchor="end" font-weight="normal" >Q[7..0]</text><text x="399" y="124.4" font-size="3.8" fill="#141414" stroke="#141414" stroke-width="0.12" text-anchor="start" font-weight="normal" >C</text><path d="M390.8,112.1 L394,113.6 L390.8,115.1 Z" fill="#101018"/><path d="M387.8,112.5 L390.4,113.6 L387.8,114.69999999999999 Z" fill="#2a2aa8"/><path d="M390.8,121.4 L394,122.9 L390.8,124.4 Z" fill="#101018"/><path d="M387.8,121.80000000000001 L390.4,122.9 L387.8,124.0 Z" fill="#2a2aa8"/><circle cx="431.2" cy="113.6" r="1.5" fill="#141450"/><text x="394" y="109.3" font-size="4.1" fill="#1e2aa8" stroke="#1e2aa8" stroke-width="0.1" text-anchor="start" font-weight="normal" >U9</text><text x="394" y="131.8" font-size="4.1" fill="#1e2aa8" stroke="#1e2aa8" stroke-width="0.1" text-anchor="start" font-weight="normal" >FD8B</text><rect x="394.5" y="163.5" width="35.0" height="17.0" fill="#fff9b8" stroke="#b4503c" stroke-width="1.0" /><text x="398" y="169.2" font-size="3.8" fill="#141414" stroke="#141414" stroke-width="0.12" text-anchor="start" font-weight="normal" >D[7..0]</text><text x="426.4" y="169.2" font-size="3.8" fill="#141414" stroke="#141414" stroke-width="0.12" text-anchor="end" font-weight="normal" >Q[7..0]</text><text x="399" y="178.5" font-size="3.8" fill="#141414" stroke="#141414" stroke-width="0.12" text-anchor="start" font-weight="normal" >C</text><path d="M390.8,166.2 L394,167.7 L390.8,169.2 Z" fill="#101018"/><path d="M387.8,166.6 L390.4,167.7 L387.8,168.79999999999998 Z" fill="#2a2aa8"/><path d="M390.8,175.5 L394,177 L390.8,178.5 Z" fill="#101018"/><path d="M387.8,175.9 L390.4,177 L387.8,178.1 Z" fill="#2a2aa8"/><circle cx="431.2" cy="167.7" r="1.5" fill="#141450"/><text x="394" y="163.6" font-size="4.1" fill="#1e2aa8" stroke="#1e2aa8" stroke-width="0.1" text-anchor="start" font-weight="normal" >U11</text><text x="394" y="185.3" font-size="4.1" fill="#1e2aa8" stroke="#1e2aa8" stroke-width="0.1" text-anchor="start" font-weight="normal" >FD8B</text><rect x="394.5" y="190.5" width="35.0" height="18.0" fill="#fff9b8" stroke="#b4503c" stroke-width="1.0" /><text x="398" y="196.1" font-size="3.8" fill="#141414" stroke="#141414" stroke-width="0.12" text-anchor="start" font-weight="normal" >D[7..0]</text><text x="426.4" y="196.1" font-size="3.8" fill="#141414" stroke="#141414" stroke-width="0.12" text-anchor="end" font-weight="normal" >Q[7..0]</text><text x="399" y="205.0" font-size="3.8" fill="#141414" stroke="#141414" stroke-width="0.12" text-anchor="start" font-weight="normal" >C</text><path d="M390.8,193.1 L394,194.6 L390.8,196.1 Z" fill="#101018"/><path d="M387.8,193.5 L390.4,194.6 L387.8,195.7 Z" fill="#2a2aa8"/><path d="M390.8,202.0 L394,203.5 L390.8,205.0 Z" fill="#101018"/><path d="M387.8,202.4 L390.4,203.5 L387.8,204.6 Z" fill="#2a2aa8"/><circle cx="431.2" cy="194.6" r="1.5" fill="#141450"/><text x="394" y="190.39999999999998" font-size="4.1" fill="#1e2aa8" stroke="#1e2aa8" stroke-width="0.1" text-anchor="start" font-weight="normal" >U12</text><text x="394" y="212.8" font-size="4.1" fill="#1e2aa8" stroke="#1e2aa8" stroke-width="0.1" text-anchor="start" font-weight="normal" >FD8B</text><rect x="399.5" y="217.5" width="34.0" height="18.0" fill="#fff9b8" stroke="#b4503c" stroke-width="1.0" /><text x="403" y="223.2" font-size="3.8" fill="#141414" stroke="#141414" stroke-width="0.12" text-anchor="start" font-weight="normal" >D[7..0]</text><text x="430.9" y="223.2" font-size="3.8" fill="#141414" stroke="#141414" stroke-width="0.12" text-anchor="end" font-weight="normal" >Q[7..0]</text><text x="404" y="232.5" font-size="3.8" fill="#141414" stroke="#141414" stroke-width="0.12" text-anchor="start" font-weight="normal" >C</text><path d="M395.8,220.2 L399,221.7 L395.8,223.2 Z" fill="#101018"/><path d="M392.8,220.6 L395.4,221.7 L392.8,222.79999999999998 Z" fill="#2a2aa8"/><path d="M395.8,229.5 L399,231 L395.8,232.5 Z" fill="#101018"/><path d="M392.8,229.9 L395.4,231 L392.8,232.1 Z" fill="#2a2aa8"/><circle cx="435.7" cy="221.7" r="1.5" fill="#141450"/><text x="399" y="217.29999999999998" font-size="4.1" fill="#1e2aa8" stroke="#1e2aa8" stroke-width="0.1" text-anchor="start" font-weight="normal" >U13</text><text x="399" y="239.8" font-size="4.1" fill="#1e2aa8" stroke="#1e2aa8" stroke-width="0.1" text-anchor="start" font-weight="normal" >FD8B</text><rect x="403.5" y="249.5" width="36.0" height="17.0" fill="#fff9b8" stroke="#b4503c" stroke-width="1.0" /><text x="407.6" y="254.9" font-size="3.8" fill="#141414" stroke="#141414" stroke-width="0.12" text-anchor="start" font-weight="normal" >D[7..0]</text><text x="436.0" y="254.9" font-size="3.8" fill="#141414" stroke="#141414" stroke-width="0.12" text-anchor="end" font-weight="normal" >Q[7..0]</text><text x="408.6" y="263.9" font-size="3.8" fill="#141414" stroke="#141414" stroke-width="0.12" text-anchor="start" font-weight="normal" >C</text><path d="M400.40000000000003,251.9 L403.6,253.4 L400.40000000000003,254.9 Z" fill="#101018"/><path d="M397.40000000000003,252.3 L400.0,253.4 L397.40000000000003,254.5 Z" fill="#2a2aa8"/><path d="M400.40000000000003,260.9 L403.6,262.4 L400.40000000000003,263.9 Z" fill="#101018"/><path d="M397.40000000000003,261.29999999999995 L400.0,262.4 L397.40000000000003,263.5 Z" fill="#2a2aa8"/><circle cx="440.8" cy="253.4" r="1.5" fill="#141450"/><text x="403.6" y="248.7" font-size="4.1" fill="#1e2aa8" stroke="#1e2aa8" stroke-width="0.1" text-anchor="start" font-weight="normal" >U14</text><text x="403.6" y="270.8" font-size="4.1" fill="#1e2aa8" stroke="#1e2aa8" stroke-width="0.1" text-anchor="start" font-weight="normal" >FD8B</text><polygon points="520,68.9 543.3,77.8 543.3,123.5 520,131.5" fill="#fff8bc" stroke="#b85c44" stroke-width="1"/><text x="520" y="66.5" font-size="4.1" fill="#1e2aa8" stroke="#1e2aa8" stroke-width="0.1" text-anchor="start" font-weight="normal" >U8</text><text x="523" y="83.3" font-size="3.6" fill="#141414" stroke="#141414" stroke-width="0.12" text-anchor="start" font-weight="normal" >DA[7..0]</text><path d="M516.8,80.3 L520,81.8 L516.8,83.3 Z" fill="#101018"/><path d="M513.8,80.7 L516.4,81.8 L513.8,82.89999999999999 Z" fill="#2a2aa8"/><text x="523" y="87.9" font-size="3.6" fill="#141414" stroke="#141414" stroke-width="0.12" text-anchor="start" font-weight="normal" >DB[7..0]</text><path d="M516.8,84.9 L520,86.4 L516.8,87.9 Z" fill="#101018"/><path d="M513.8,85.30000000000001 L516.4,86.4 L513.8,87.5 Z" fill="#2a2aa8"/><text x="523" y="92.6" font-size="3.6" fill="#141414" stroke="#141414" stroke-width="0.12" text-anchor="start" font-weight="normal" >DC[7..0]</text><path d="M516.8,89.6 L520,91.1 L516.8,92.6 Z" fill="#101018"/><path d="M513.8,90.0 L516.4,91.1 L513.8,92.19999999999999 Z" fill="#2a2aa8"/><text x="523" y="97.2" font-size="3.6" fill="#141414" stroke="#141414" stroke-width="0.12" text-anchor="start" font-weight="normal" >DD[7..0]</text><path d="M516.8,94.2 L520,95.7 L516.8,97.2 Z" fill="#101018"/><path d="M513.8,94.60000000000001 L516.4,95.7 L513.8,96.8 Z" fill="#2a2aa8"/><text x="523" y="105.7" font-size="3.6" fill="#141414" stroke="#141414" stroke-width="0.12" text-anchor="start" font-weight="normal" >DE[7..0]</text><path d="M516.8,102.7 L520,104.2 L516.8,105.7 Z" fill="#101018"/><path d="M513.8,103.10000000000001 L516.4,104.2 L513.8,105.3 Z" fill="#2a2aa8"/><text x="523" y="110.5" font-size="3.6" fill="#141414" stroke="#141414" stroke-width="0.12" text-anchor="start" font-weight="normal" >DF[7..0]</text><path d="M516.8,107.5 L520,109 L516.8,110.5 Z" fill="#101018"/><path d="M513.8,107.9 L516.4,109 L513.8,110.1 Z" fill="#2a2aa8"/><text x="523" y="115.1" font-size="3.6" fill="#141414" stroke="#141414" stroke-width="0.12" text-anchor="start" font-weight="normal" >DG[7..0]</text><path d="M516.8,112.1 L520,113.6 L516.8,115.1 Z" fill="#101018"/><path d="M513.8,112.5 L516.4,113.6 L513.8,114.69999999999999 Z" fill="#2a2aa8"/><text x="523" y="119.6" font-size="3.6" fill="#141414" stroke="#141414" stroke-width="0.12" text-anchor="start" font-weight="normal" >DH[7..0]</text><path d="M516.8,116.6 L520,118.1 L516.8,119.6 Z" fill="#101018"/><path d="M513.8,117.0 L516.4,118.1 L513.8,119.19999999999999 Z" fill="#2a2aa8"/><text x="541" y="101.8" font-size="3.6" fill="#141414" stroke="#141414" stroke-width="0.12" text-anchor="end" font-weight="normal" >Y[7..0]</text><text x="519" y="142" font-size="4.1" fill="#1e2aa8" stroke="#1e2aa8" stroke-width="0.1" text-anchor="start" font-weight="normal" >MUX</text><text x="520" y="134.5" font-size="3.6" fill="#141414" stroke="#141414" stroke-width="0.12" text-anchor="start" font-weight="normal" >S[1..0]</text><text x="560" y="97" font-size="4.1" fill="#1e2aa8" stroke="#1e2aa8" stroke-width="0.1" text-anchor="start" font-weight="normal" >U9</text><text x="560" y="137.5" font-size="4.1" fill="#1e2aa8" stroke="#1e2aa8" stroke-width="0.1" text-anchor="start" font-weight="normal" >BUS_IN</text><path d="M572.8,98.4 L576,99.9 L572.8,101.4 Z" fill="#101018"/><path d="M569.8,98.80000000000001 L572.4,99.9 L569.8,101.0 Z" fill="#2a2aa8"/><path d="M572.8,103.0 L576,104.5 L572.8,106.0 Z" fill="#101018"/><path d="M569.8,103.4 L572.4,104.5 L569.8,105.6 Z" fill="#2a2aa8"/><path d="M572.8,107.4 L576,108.9 L572.8,110.4 Z" fill="#101018"/><path d="M569.8,107.80000000000001 L572.4,108.9 L569.8,110.0 Z" fill="#2a2aa8"/><path d="M572.8,111.9 L576,113.4 L572.8,114.9 Z" fill="#101018"/><path d="M569.8,112.30000000000001 L572.4,113.4 L569.8,114.5 Z" fill="#2a2aa8"/><path d="M572.8,116.7 L576,118.2 L572.8,119.7 Z" fill="#101018"/><path d="M569.8,117.10000000000001 L572.4,118.2 L569.8,119.3 Z" fill="#2a2aa8"/><path d="M572.8,121.2 L576,122.7 L572.8,124.2 Z" fill="#101018"/><path d="M569.8,121.60000000000001 L572.4,122.7 L569.8,123.8 Z" fill="#2a2aa8"/><path d="M572.8,125.8 L576,127.3 L572.8,128.8 Z" fill="#101018"/><path d="M569.8,126.2 L572.4,127.3 L569.8,128.4 Z" fill="#2a2aa8"/><path d="M572.8,130.4 L576,131.9 L572.8,133.4 Z" fill="#101018"/><path d="M569.8,130.8 L572.4,131.9 L569.8,133.0 Z" fill="#2a2aa8"/><text x="637" y="94" font-size="4.1" fill="#1e2aa8" stroke="#1e2aa8" stroke-width="0.1" text-anchor="start" font-weight="normal" >U16</text><text x="637" y="172.5" font-size="4.1" fill="#1e2aa8" stroke="#1e2aa8" stroke-width="0.1" text-anchor="start" font-weight="normal" >INV</text><polygon points="637.3,95.9 645.5,100.5 637.3,105.1" fill="none" stroke="#3030d0" stroke-width="0.9"/><circle cx="647" cy="100.5" r="1.3" fill="none" stroke="#202040" stroke-width="0.8"/><path d="M634.0999999999999,99.0 L637.3,100.5 L634.0999999999999,102.0 Z" fill="#101018"/><path d="M631.0999999999999,99.4 L633.6999999999999,100.5 L631.0999999999999,101.6 Z" fill="#2a2aa8"/><rect x="659.3" y="98.2" width="17.2" height="4.6" rx="1" fill="#f9f07a" stroke="#a44c2e" stroke-width="1.1"/><text x="666" y="102.0" font-size="4.0" fill="#8a5a20" stroke="#8a5a20" stroke-width="0.12" text-anchor="middle" font-weight="normal" >XXX</text><text x="677.5" y="102.1" font-size="4.2" fill="#3444bc" stroke="#3444bc" stroke-width="0.12" text-anchor="start" font-weight="normal" >AE15</text><polygon points="637.3,104.83000000000001 645.5,109.43 637.3,114.03" fill="none" stroke="#3030d0" stroke-width="0.9"/><circle cx="647" cy="109.43" r="1.3" fill="none" stroke="#202040" stroke-width="0.8"/><path d="M634.0999999999999,107.93 L637.3,109.43 L634.0999999999999,110.93 Z" fill="#101018"/><path d="M631.0999999999999,108.33000000000001 L633.6999999999999,109.43 L631.0999999999999,110.53 Z" fill="#2a2aa8"/><rect x="659.3" y="107.13000000000001" width="17.2" height="4.6" rx="1" fill="#f9f07a" stroke="#a44c2e" stroke-width="1.1"/><text x="666" y="110.93" font-size="4.0" fill="#8a5a20" stroke="#8a5a20" stroke-width="0.12" text-anchor="middle" font-weight="normal" >XXX</text><text x="677.5" y="111.03" font-size="4.2" fill="#3444bc" stroke="#3444bc" stroke-width="0.12" text-anchor="start" font-weight="normal" >AE16</text><polygon points="637.3,113.76 645.5,118.36 637.3,122.96" fill="none" stroke="#3030d0" stroke-width="0.9"/><circle cx="647" cy="118.36" r="1.3" fill="none" stroke="#202040" stroke-width="0.8"/><path d="M634.0999999999999,116.86 L637.3,118.36 L634.0999999999999,119.86 Z" fill="#101018"/><path d="M631.0999999999999,117.26 L633.6999999999999,118.36 L631.0999999999999,119.46 Z" fill="#2a2aa8"/><rect x="659.3" y="116.06" width="17.2" height="4.6" rx="1" fill="#f9f07a" stroke="#a44c2e" stroke-width="1.1"/><text x="666" y="119.86" font-size="4.0" fill="#8a5a20" stroke="#8a5a20" stroke-width="0.12" text-anchor="middle" font-weight="normal" >XXX</text><text x="677.5" y="119.96" font-size="4.2" fill="#3444bc" stroke="#3444bc" stroke-width="0.12" text-anchor="start" font-weight="normal" >AE16</text><polygon points="637.3,122.69 645.5,127.28999999999999 637.3,131.89" fill="none" stroke="#3030d0" stroke-width="0.9"/><circle cx="647" cy="127.28999999999999" r="1.3" fill="none" stroke="#202040" stroke-width="0.8"/><path d="M634.0999999999999,125.78999999999999 L637.3,127.28999999999999 L634.0999999999999,128.79 Z" fill="#101018"/><path d="M631.0999999999999,126.19 L633.6999999999999,127.28999999999999 L631.0999999999999,128.39 Z" fill="#2a2aa8"/><rect x="659.3" y="124.99" width="17.2" height="4.6" rx="1" fill="#f9f07a" stroke="#a44c2e" stroke-width="1.1"/><text x="666" y="128.79" font-size="4.0" fill="#8a5a20" stroke="#8a5a20" stroke-width="0.12" text-anchor="middle" font-weight="normal" >XXX</text><text x="677.5" y="128.89" font-size="4.2" fill="#3444bc" stroke="#3444bc" stroke-width="0.12" text-anchor="start" font-weight="normal" >AE17</text><polygon points="637.3,131.62 645.5,136.22 637.3,140.82" fill="none" stroke="#3030d0" stroke-width="0.9"/><circle cx="647" cy="136.22" r="1.3" fill="none" stroke="#202040" stroke-width="0.8"/><path d="M634.0999999999999,134.72 L637.3,136.22 L634.0999999999999,137.72 Z" fill="#101018"/><path d="M631.0999999999999,135.12 L633.6999999999999,136.22 L631.0999999999999,137.32 Z" fill="#2a2aa8"/><rect x="659.3" y="133.92" width="17.2" height="4.6" rx="1" fill="#f9f07a" stroke="#a44c2e" stroke-width="1.1"/><text x="666" y="137.72" font-size="4.0" fill="#8a5a20" stroke="#8a5a20" stroke-width="0.12" text-anchor="middle" font-weight="normal" >XXX</text><text x="677.5" y="137.82" font-size="4.2" fill="#3444bc" stroke="#3444bc" stroke-width="0.12" text-anchor="start" font-weight="normal" >AE17</text><polygon points="637.3,140.55 645.5,145.15 637.3,149.75" fill="none" stroke="#3030d0" stroke-width="0.9"/><circle cx="647" cy="145.15" r="1.3" fill="none" stroke="#202040" stroke-width="0.8"/><path d="M634.0999999999999,143.65 L637.3,145.15 L634.0999999999999,146.65 Z" fill="#101018"/><path d="M631.0999999999999,144.05 L633.6999999999999,145.15 L631.0999999999999,146.25 Z" fill="#2a2aa8"/><rect x="659.3" y="142.85" width="17.2" height="4.6" rx="1" fill="#f9f07a" stroke="#a44c2e" stroke-width="1.1"/><text x="666" y="146.65" font-size="4.0" fill="#8a5a20" stroke="#8a5a20" stroke-width="0.12" text-anchor="middle" font-weight="normal" >XXX</text><text x="677.5" y="146.75" font-size="4.2" fill="#3444bc" stroke="#3444bc" stroke-width="0.12" text-anchor="start" font-weight="normal" >AE18</text><polygon points="637.3,149.48 645.5,154.07999999999998 637.3,158.67999999999998" fill="none" stroke="#3030d0" stroke-width="0.9"/><circle cx="647" cy="154.07999999999998" r="1.3" fill="none" stroke="#202040" stroke-width="0.8"/><path d="M634.0999999999999,152.57999999999998 L637.3,154.07999999999998 L634.0999999999999,155.57999999999998 Z" fill="#101018"/><path d="M631.0999999999999,152.98 L633.6999999999999,154.07999999999998 L631.0999999999999,155.17999999999998 Z" fill="#2a2aa8"/><rect x="659.3" y="151.77999999999997" width="17.2" height="4.6" rx="1" fill="#f9f07a" stroke="#a44c2e" stroke-width="1.1"/><text x="666" y="155.57999999999998" font-size="4.0" fill="#8a5a20" stroke="#8a5a20" stroke-width="0.12" text-anchor="middle" font-weight="normal" >XXX</text><text x="677.5" y="155.67999999999998" font-size="4.2" fill="#3444bc" stroke="#3444bc" stroke-width="0.12" text-anchor="start" font-weight="normal" >AF19</text><polygon points="637.3,158.41 645.5,163.01 637.3,167.60999999999999" fill="none" stroke="#3030d0" stroke-width="0.9"/><circle cx="647" cy="163.01" r="1.3" fill="none" stroke="#202040" stroke-width="0.8"/><path d="M634.0999999999999,161.51 L637.3,163.01 L634.0999999999999,164.51 Z" fill="#101018"/><path d="M631.0999999999999,161.91 L633.6999999999999,163.01 L631.0999999999999,164.10999999999999 Z" fill="#2a2aa8"/><rect x="659.3" y="160.70999999999998" width="17.2" height="4.6" rx="1" fill="#f9f07a" stroke="#a44c2e" stroke-width="1.1"/><text x="666" y="164.51" font-size="4.0" fill="#8a5a20" stroke="#8a5a20" stroke-width="0.12" text-anchor="middle" font-weight="normal" >XXX</text><text x="677.5" y="164.60999999999999" font-size="4.2" fill="#3444bc" stroke="#3444bc" stroke-width="0.12" text-anchor="start" font-weight="normal" >AE19</text><rect x="155.5" y="123.5" width="27.0" height="26.0" fill="#fff9b8" stroke="#b4503c" stroke-width="1.0" /><circle cx="170.3" cy="135" r="4.5" fill="none" stroke="#ede9c6" stroke-width="2.4" stroke-dasharray="1.6 1.1"/><circle cx="170.3" cy="135" r="3.3" fill="none" stroke="#ede9c6" stroke-width="1.2"/><text x="177.3" y="128.8" font-size="3.6" fill="#141414" stroke="#141414" stroke-width="0.12" text-anchor="end" font-weight="normal" >Q[1..0]</text><text x="160.3" y="138.2" font-size="3.6" fill="#141414" stroke="#141414" stroke-width="0.12" text-anchor="start" font-weight="normal" >CE</text><text x="160.3" y="142.6" font-size="3.6" fill="#141414" stroke="#141414" stroke-width="0.12" text-anchor="start" font-weight="normal" >C</text><text x="178.3" y="138.2" font-size="3.6" fill="#141414" stroke="#141414" stroke-width="0.12" text-anchor="end" font-weight="normal" >CEO</text><text x="178.3" y="142.6" font-size="3.6" fill="#141414" stroke="#141414" stroke-width="0.12" text-anchor="end" font-weight="normal" >TC</text><text x="168.8" y="148" font-size="3.6" fill="#141414" stroke="#141414" stroke-width="0.12" text-anchor="middle" font-weight="normal" >CLR</text><text x="155.3" y="121.5" font-size="4.1" fill="#1e2aa8" stroke="#1e2aa8" stroke-width="0.1" text-anchor="start" font-weight="normal" >U10</text><text x="155.3" y="159.2" font-size="4.1" fill="#1e2aa8" stroke="#1e2aa8" stroke-width="0.1" text-anchor="start" font-weight="normal" >COUNTER</text><text x="137.5" y="138.3" font-size="4.2" fill="#b84a4a" stroke="#b84a4a" stroke-width="0.12" text-anchor="start" font-weight="normal" textLength="8.2" lengthAdjust="spacingAndGlyphs">VCC</text><polyline points="147.5,135.3 147.5,138.3" fill="none" stroke="#b84a4a" stroke-width="0.9" stroke-linejoin="miter" stroke-linecap="square"/><polyline points="147.5,136.8 152.3,136.8" fill="none" stroke="#b84a4a" stroke-width="0.9" stroke-linejoin="miter" stroke-linecap="square"/><path d="M152.10000000000002,135.3 L155.3,136.8 L152.10000000000002,138.3 Z" fill="#101018"/><path d="M149.10000000000002,135.70000000000002 L151.70000000000002,136.8 L149.10000000000002,137.9 Z" fill="#2a2aa8"/><path d="M152.10000000000002,139.7 L155.3,141.2 L152.10000000000002,142.7 Z" fill="#101018"/><path d="M149.10000000000002,140.1 L151.70000000000002,141.2 L149.10000000000002,142.29999999999998 Z" fill="#2a2aa8"/><path d="M184.8,135.0 l3.4,3.6 M184.8,138.60000000000002 l3.4,-3.6" stroke="#e82828" stroke-width="0.8"/><polyline points="182.3,136.8 185.3,136.8" fill="none" stroke="#202040" stroke-width="0.8" stroke-linejoin="miter" stroke-linecap="square"/><path d="M184.8,139.39999999999998 l3.4,3.6 M184.8,143.0 l3.4,-3.6" stroke="#e82828" stroke-width="0.8"/><polyline points="182.3,141.2 185.3,141.2" fill="none" stroke="#202040" stroke-width="0.8" stroke-linejoin="miter" stroke-linecap="square"/><polyline points="169.2,149.3 169.2,167.8" fill="none" stroke="#3030a8" stroke-width="1.2" stroke-linejoin="miter" stroke-linecap="square"/><path d="M164.7,167.8 h9" stroke="#b84a4a" stroke-width="1.1"/><path d="M165.2,167.8 L169.2,171.4 L173.2,167.8 Z" fill="#c88080" stroke="#b84a4a" stroke-width="0.6"/><text x="169.2" y="176.0" font-size="4.0" fill="#b84a4a" stroke="#b84a4a" stroke-width="0.12" text-anchor="middle" font-weight="normal" textLength="7.4" lengthAdjust="spacingAndGlyphs">GND</text><circle cx="183.8" cy="127.4" r="1.0" fill="#1a1a60"/><rect x="497.5" y="280.5" width="27.0" height="26.0" fill="#fff9b8" stroke="#b4503c" stroke-width="1.0" /><circle cx="512.5" cy="292.4" r="4.5" fill="none" stroke="#ede9c6" stroke-width="2.4" stroke-dasharray="1.6 1.1"/><circle cx="512.5" cy="292.4" r="3.3" fill="none" stroke="#ede9c6" stroke-width="1.2"/><text x="519.5" y="286.2" font-size="3.6" fill="#141414" stroke="#141414" stroke-width="0.12" text-anchor="end" font-weight="normal" >Q[1..0]</text><text x="502.5" y="295.59999999999997" font-size="3.6" fill="#141414" stroke="#141414" stroke-width="0.12" text-anchor="start" font-weight="normal" >CE</text><text x="502.5" y="300.0" font-size="3.6" fill="#141414" stroke="#141414" stroke-width="0.12" text-anchor="start" font-weight="normal" >C</text><text x="520.5" y="295.59999999999997" font-size="3.6" fill="#141414" stroke="#141414" stroke-width="0.12" text-anchor="end" font-weight="normal" >CEO</text><text x="520.5" y="300.0" font-size="3.6" fill="#141414" stroke="#141414" stroke-width="0.12" text-anchor="end" font-weight="normal" >TC</text><text x="511.0" y="305.4" font-size="3.6" fill="#141414" stroke="#141414" stroke-width="0.12" text-anchor="middle" font-weight="normal" >CLR</text><text x="497.5" y="278.9" font-size="4.1" fill="#1e2aa8" stroke="#1e2aa8" stroke-width="0.1" text-anchor="start" font-weight="normal" >U15</text><text x="497.5" y="316.59999999999997" font-size="4.1" fill="#1e2aa8" stroke="#1e2aa8" stroke-width="0.1" text-anchor="start" font-weight="normal" >COUNTER</text><text x="480.3" y="295.7" font-size="4.2" fill="#b84a4a" stroke="#b84a4a" stroke-width="0.12" text-anchor="start" font-weight="normal" textLength="8.2" lengthAdjust="spacingAndGlyphs">VCC</text><polyline points="490.3,292.7 490.3,295.7" fill="none" stroke="#b84a4a" stroke-width="0.9" stroke-linejoin="miter" stroke-linecap="square"/><polyline points="490.3,294.2 494.5,294.2" fill="none" stroke="#b84a4a" stroke-width="0.9" stroke-linejoin="miter" stroke-linecap="square"/><path d="M494.3,292.7 L497.5,294.2 L494.3,295.7 Z" fill="#101018"/><path d="M491.3,293.09999999999997 L493.9,294.2 L491.3,295.3 Z" fill="#2a2aa8"/><path d="M494.3,297.09999999999997 L497.5,298.59999999999997 L494.3,300.09999999999997 Z" fill="#101018"/><path d="M491.3,297.49999999999994 L493.9,298.59999999999997 L491.3,299.7 Z" fill="#2a2aa8"/><path d="M527.0,292.4 l3.4,3.6 M527.0,296.0 l3.4,-3.6" stroke="#e82828" stroke-width="0.8"/><polyline points="524.5,294.2 527.5,294.2" fill="none" stroke="#202040" stroke-width="0.8" stroke-linejoin="miter" stroke-linecap="square"/><path d="M527.0,296.79999999999995 l3.4,3.6 M527.0,300.4 l3.4,-3.6" stroke="#e82828" stroke-width="0.8"/><polyline points="524.5,298.59999999999997 527.5,298.59999999999997" fill="none" stroke="#202040" stroke-width="0.8" stroke-linejoin="miter" stroke-linecap="square"/><polyline points="511.2,306.7 511.2,325.3" fill="none" stroke="#3030a8" stroke-width="1.2" stroke-linejoin="miter" stroke-linecap="square"/><path d="M506.7,325.3 h9" stroke="#b84a4a" stroke-width="1.1"/><path d="M507.2,325.3 L511.2,328.90000000000003 L515.2,325.3 Z" fill="#c88080" stroke="#b84a4a" stroke-width="0.6"/><text x="511.2" y="333.5" font-size="4.0" fill="#b84a4a" stroke="#b84a4a" stroke-width="0.12" text-anchor="middle" font-weight="normal" textLength="7.4" lengthAdjust="spacingAndGlyphs">GND</text><circle cx="526.0" cy="284.79999999999995" r="1.0" fill="#1a1a60"/><text x="205" y="132" font-size="4.1" fill="#1e2aa8" stroke="#1e2aa8" stroke-width="0.1" text-anchor="start" font-weight="normal" >U19</text><text x="221" y="133" font-size="4.1" fill="#1e2aa8" stroke="#1e2aa8" stroke-width="0.1" text-anchor="start" font-weight="normal" >U20</text><text x="196.5" y="135.5" font-size="3.8" fill="#141414" stroke="#141414" stroke-width="0.12" text-anchor="start" font-weight="normal" >S1</text><text x="205" y="148.5" font-size="4.1" fill="#1e2aa8" stroke="#1e2aa8" stroke-width="0.1" text-anchor="start" font-weight="normal" >BUS_IN</text><text x="224" y="171" font-size="4.1" fill="#1e2aa8" stroke="#1e2aa8" stroke-width="0.1" text-anchor="start" font-weight="normal" >S1_N</text><circle cx="225" cy="136.2" r="1" fill="none" stroke="#404040" stroke-width="0.6"/><polyline points="221,136.2 227,136.2" fill="none" stroke="#404040" stroke-width="0.8" stroke-linejoin="miter" stroke-linecap="square"/><circle cx="225" cy="140.6" r="1" fill="none" stroke="#404040" stroke-width="0.6"/><polyline points="221,140.6 227,140.6" fill="none" stroke="#404040" stroke-width="0.8" stroke-linejoin="miter" stroke-linecap="square"/><circle cx="225" cy="145.0" r="1" fill="none" stroke="#404040" stroke-width="0.6"/><polyline points="221,145.0 227,145.0" fill="none" stroke="#404040" stroke-width="0.8" stroke-linejoin="miter" stroke-linecap="square"/><circle cx="225" cy="149.39999999999998" r="1" fill="none" stroke="#404040" stroke-width="0.6"/><polyline points="221,149.39999999999998 227,149.39999999999998" fill="none" stroke="#404040" stroke-width="0.8" stroke-linejoin="miter" stroke-linecap="square"/><circle cx="225" cy="153.79999999999998" r="1" fill="none" stroke="#404040" stroke-width="0.6"/><polyline points="221,153.79999999999998 227,153.79999999999998" fill="none" stroke="#404040" stroke-width="0.8" stroke-linejoin="miter" stroke-linecap="square"/><circle cx="225" cy="158.2" r="1" fill="none" stroke="#404040" stroke-width="0.6"/><polyline points="221,158.2 227,158.2" fill="none" stroke="#404040" stroke-width="0.8" stroke-linejoin="miter" stroke-linecap="square"/><circle cx="225" cy="162.6" r="1" fill="none" stroke="#404040" stroke-width="0.6"/><polyline points="221,162.6 227,162.6" fill="none" stroke="#404040" stroke-width="0.8" stroke-linejoin="miter" stroke-linecap="square"/><circle cx="225" cy="167.0" r="1" fill="none" stroke="#404040" stroke-width="0.6"/><polyline points="221,167.0 227,167.0" fill="none" stroke="#404040" stroke-width="0.8" stroke-linejoin="miter" stroke-linecap="square"/><polyline points="223.2,146 223.2,171" fill="none" stroke="#3030a8" stroke-width="1.2" stroke-linejoin="miter" stroke-linecap="square"/><path d="M218.2,171 h9" stroke="#b84a4a" stroke-width="1.1"/><path d="M218.7,171 L222.7,174.6 L226.7,171 Z" fill="#c88080" stroke="#b84a4a" stroke-width="0.6"/><text x="222.7" y="179.3" font-size="4.0" fill="#b84a4a" stroke="#b84a4a" stroke-width="0.12" text-anchor="middle" font-weight="normal" textLength="7.4" lengthAdjust="spacingAndGlyphs">GND</text><polygon points="245.5,134.6 267,134.6 270.3,136.7 267,138.8 245.5,138.8" fill="#c4c4c4" stroke="#3a3a3a" stroke-width="1.1"/><text x="248" y="138" font-size="3.4" fill="#1a1a1a" stroke="#1a1a1a" stroke-width="0.12" text-anchor="start" font-weight="normal" textLength="18" lengthAdjust="spacingAndGlyphs">S1_N[7..0]</text><polyline points="240,136.5 245.2,136.5" fill="none" stroke="#141414" stroke-width="0.9" stroke-linejoin="miter" stroke-linecap="square"/><text x="246" y="131.5" font-size="3.6" fill="#141414" stroke="#141414" stroke-width="0.12" text-anchor="start" font-weight="normal" >S1</text><rect x="277.3" y="134.7" width="3.3" height="3.6" fill="#f4e478" stroke="#6a5828" stroke-width="0.8"/><rect x="281.6" y="134.7" width="3.3" height="3.6" fill="#f4e478" stroke="#6a5828" stroke-width="0.8"/><rect x="285.90000000000003" y="134.7" width="3.3" height="3.6" fill="#f4e478" stroke="#6a5828" stroke-width="0.8"/><rect x="290.2" y="134.7" width="3.3" height="3.6" fill="#f4e478" stroke="#6a5828" stroke-width="0.8"/><rect x="294.5" y="134.7" width="3.3" height="3.6" fill="#f4e478" stroke="#6a5828" stroke-width="0.8"/><rect x="298.8" y="134.7" width="3.3" height="3.6" fill="#f4e478" stroke="#6a5828" stroke-width="0.8"/><rect x="303.1" y="134.7" width="3.3" height="3.6" fill="#f4e478" stroke="#6a5828" stroke-width="0.8"/><rect x="307.40000000000003" y="134.7" width="3.3" height="3.6" fill="#f4e478" stroke="#6a5828" stroke-width="0.8"/><circle cx="21.1" cy="297.9" r="3.5" fill="#c4c4fa" stroke="#3434f0" stroke-width="1.2"/><path d="M19.2,299.3 L19.2,296.5 L21.1,298.3 L23,296.5 L23,299.3" fill="none" stroke="#1818b0" stroke-width="0.8"/><polygon points="32,295.6 53.5,295.6 56.6,298.4 53.5,301.2 32,301.2" fill="#d2d2d2" stroke="#3a3a3a" stroke-width="1.2"/><text x="34" y="299.9" font-size="3.8" fill="#1a1a1a" stroke="#1a1a1a" stroke-width="0.12" text-anchor="start" font-weight="normal" textLength="18" lengthAdjust="spacingAndGlyphs">CLK_REF</text><rect x="69.5" y="293.5" width="45.0" height="18.0" fill="#6f6f75" stroke="#a84848" stroke-width="1.0" /><rect x="72.5" y="295.5" width="40.0" height="9.0" fill="#cacae0" stroke="#a84848" stroke-width="1.0" /><text x="74" y="300.8" font-size="3.8" fill="#151520" stroke="#151520" stroke-width="0.12" text-anchor="start" font-weight="normal" textLength="15.5" lengthAdjust="spacingAndGlyphs">TIMEBASE</text><text x="111" y="300.8" font-size="3.8" fill="#151520" stroke="#151520" stroke-width="0.12" text-anchor="end" font-weight="normal" >FREQ</text><text x="75" y="309.6" font-size="3.8" fill="#c8c8d4" stroke="#c8c8d4" stroke-width="0.12" text-anchor="start" font-weight="normal" textLength="35" lengthAdjust="spacingAndGlyphs">Frequency Generator</text><text x="70" y="291.5" font-size="4.1" fill="#1e2aa8" stroke="#1e2aa8" stroke-width="0.1" text-anchor="start" font-weight="normal" >U3</text><text x="70" y="317" font-size="4.1" fill="#1e2aa8" stroke="#1e2aa8" stroke-width="0.1" text-anchor="start" font-weight="normal" >CLKGEN</text><circle cx="117" cy="297.9" r="1.0" fill="#1a1a60"/><text x="115" y="341" font-size="3.6" fill="#141414" stroke="#141414" stroke-width="0.12" text-anchor="start" font-weight="normal" >S[2..0]</text><text x="127" y="339" font-size="4.1" fill="#1e2aa8" stroke="#1e2aa8" stroke-width="0.1" text-anchor="start" font-weight="normal" >U17</text><text x="127" y="358.5" font-size="4.1" fill="#1e2aa8" stroke="#1e2aa8" stroke-width="0.1" text-anchor="start" font-weight="normal" >BUS_IN</text><text x="140" y="342.4" font-size="3.8" fill="#141414" stroke="#141414" stroke-width="0.12" text-anchor="start" font-weight="normal" >D0</text><path d="M136.8,341.5 L140,343 L136.8,344.5 Z" fill="#101018"/><path d="M133.8,341.9 L136.4,343 L133.8,344.1 Z" fill="#2a2aa8"/><text x="140" y="347.0" font-size="3.8" fill="#141414" stroke="#141414" stroke-width="0.12" text-anchor="start" font-weight="normal" >D1</text><path d="M136.8,346.1 L140,347.6 L136.8,349.1 Z" fill="#101018"/><path d="M133.8,346.5 L136.4,347.6 L133.8,348.70000000000005 Z" fill="#2a2aa8"/><text x="140" y="351.4" font-size="3.8" fill="#141414" stroke="#141414" stroke-width="0.12" text-anchor="start" font-weight="normal" >D2</text><path d="M136.8,350.5 L140,352 L136.8,353.5 Z" fill="#101018"/><path d="M133.8,350.9 L136.4,352 L133.8,353.1 Z" fill="#2a2aa8"/><rect x="191.5" y="329.5" width="22.0" height="40.0" fill="#fff9b8" stroke="#b4503c" stroke-width="1.0" /><text x="195" y="344.5" font-size="3.6" fill="#141414" stroke="#141414" stroke-width="0.12" text-anchor="start" font-weight="normal" >A0</text><path d="M188.20000000000002,341.5 L191.4,343 L188.20000000000002,344.5 Z" fill="#101018"/><path d="M185.20000000000002,341.9 L187.8,343 L185.20000000000002,344.1 Z" fill="#2a2aa8"/><text x="195" y="349.1" font-size="3.6" fill="#141414" stroke="#141414" stroke-width="0.12" text-anchor="start" font-weight="normal" >A1</text><path d="M188.20000000000002,346.1 L191.4,347.6 L188.20000000000002,349.1 Z" fill="#101018"/><path d="M185.20000000000002,346.5 L187.8,347.6 L185.20000000000002,348.70000000000005 Z" fill="#2a2aa8"/><text x="195" y="353.5" font-size="3.6" fill="#141414" stroke="#141414" stroke-width="0.12" text-anchor="start" font-weight="normal" >A2</text><path d="M188.20000000000002,350.5 L191.4,352 L188.20000000000002,353.5 Z" fill="#101018"/><path d="M185.20000000000002,350.9 L187.8,352 L185.20000000000002,353.1 Z" fill="#2a2aa8"/><text x="211" y="335.2" font-size="3.6" fill="#141414" stroke="#141414" stroke-width="0.12" text-anchor="end" font-weight="normal" >D0</text><circle cx="215.5" cy="333.7" r="1.0" fill="#1a1a60"/><text x="211" y="339.8" font-size="3.6" fill="#141414" stroke="#141414" stroke-width="0.12" text-anchor="end" font-weight="normal" >D1</text><circle cx="215.5" cy="338.3" r="1.0" fill="#1a1a60"/><text x="211" y="344.4" font-size="3.6" fill="#141414" stroke="#141414" stroke-width="0.12" text-anchor="end" font-weight="normal" >D2</text><circle cx="215.5" cy="342.9" r="1.0" fill="#1a1a60"/><text x="211" y="349.0" font-size="3.6" fill="#141414" stroke="#141414" stroke-width="0.12" text-anchor="end" font-weight="normal" >D3</text><circle cx="215.5" cy="347.5" r="1.0" fill="#1a1a60"/><text x="211" y="353.59999999999997" font-size="3.6" fill="#141414" stroke="#141414" stroke-width="0.12" text-anchor="end" font-weight="normal" >D4</text><circle cx="215.5" cy="352.09999999999997" r="1.0" fill="#1a1a60"/><text x="211" y="358.2" font-size="3.6" fill="#141414" stroke="#141414" stroke-width="0.12" text-anchor="end" font-weight="normal" >D5</text><circle cx="215.5" cy="356.7" r="1.0" fill="#1a1a60"/><text x="211" y="362.8" font-size="3.6" fill="#141414" stroke="#141414" stroke-width="0.12" text-anchor="end" font-weight="normal" >D6</text><circle cx="215.5" cy="361.3" r="1.0" fill="#1a1a60"/><text x="211" y="367.4" font-size="3.6" fill="#141414" stroke="#141414" stroke-width="0.12" text-anchor="end" font-weight="normal" >D7</text><circle cx="215.5" cy="365.9" r="1.0" fill="#1a1a60"/><text x="192" y="327.5" font-size="4.1" fill="#1e2aa8" stroke="#1e2aa8" stroke-width="0.1" text-anchor="start" font-weight="normal" >U18</text><text x="192" y="375" font-size="4.1" fill="#1e2aa8" stroke="#1e2aa8" stroke-width="0.1" text-anchor="start" font-weight="normal" >D3_8B</text><rect x="317.5" y="314.0" width="25.9" height="4.8" rx="1" fill="#f9f07a" stroke="#a44c2e" stroke-width="1.1"/><text x="326" y="317.9" font-size="4.0" fill="#8a5a20" stroke="#8a5a20" stroke-width="0.12" text-anchor="middle" font-weight="normal" >XXX</text><text x="346" y="318.0" font-size="4.2" fill="#3444bc" stroke="#3444bc" stroke-width="0.12" text-anchor="start" font-weight="normal" textLength="8" lengthAdjust="spacingAndGlyphs">AF20</text><rect x="317.5" y="323.0" width="25.9" height="4.8" rx="1" fill="#f9f07a" stroke="#a44c2e" stroke-width="1.1"/><text x="326" y="326.9" font-size="4.0" fill="#8a5a20" stroke="#8a5a20" stroke-width="0.12" text-anchor="middle" font-weight="normal" >XXX</text><text x="346" y="327.0" font-size="4.2" fill="#3444bc" stroke="#3444bc" stroke-width="0.12" text-anchor="start" font-weight="normal" textLength="8" lengthAdjust="spacingAndGlyphs">AE20</text><rect x="317.5" y="331.8" width="25.9" height="4.8" rx="1" fill="#f9f07a" stroke="#a44c2e" stroke-width="1.1"/><text x="326" y="335.7" font-size="4.0" fill="#8a5a20" stroke="#8a5a20" stroke-width="0.12" text-anchor="middle" font-weight="normal" >XXX</text><text x="346" y="335.8" font-size="4.2" fill="#3444bc" stroke="#3444bc" stroke-width="0.12" text-anchor="start" font-weight="normal" textLength="8" lengthAdjust="spacingAndGlyphs">AF21</text><rect x="317.5" y="341.3" width="25.9" height="4.8" rx="1" fill="#f9f07a" stroke="#a44c2e" stroke-width="1.1"/><text x="326" y="345.2" font-size="4.0" fill="#8a5a20" stroke="#8a5a20" stroke-width="0.12" text-anchor="middle" font-weight="normal" >XXX</text><text x="346" y="345.3" font-size="4.2" fill="#3444bc" stroke="#3444bc" stroke-width="0.12" text-anchor="start" font-weight="normal" textLength="8" lengthAdjust="spacingAndGlyphs">AE21</text><rect x="317.5" y="368.1" width="25.9" height="4.8" rx="1" fill="#f9f07a" stroke="#a44c2e" stroke-width="1.1"/><text x="326" y="372.0" font-size="4.0" fill="#8a5a20" stroke="#8a5a20" stroke-width="0.12" text-anchor="middle" font-weight="normal" >XXX</text><text x="346" y="372.1" font-size="4.2" fill="#3444bc" stroke="#3444bc" stroke-width="0.12" text-anchor="start" font-weight="normal" textLength="8" lengthAdjust="spacingAndGlyphs">AF22</text><rect x="317.5" y="377.20000000000005" width="25.9" height="4.8" rx="1" fill="#f9f07a" stroke="#a44c2e" stroke-width="1.1"/><text x="326" y="381.1" font-size="4.0" fill="#8a5a20" stroke="#8a5a20" stroke-width="0.12" text-anchor="middle" font-weight="normal" >XXX</text><text x="346" y="381.20000000000005" font-size="4.2" fill="#3444bc" stroke="#3444bc" stroke-width="0.12" text-anchor="start" font-weight="normal" textLength="8" lengthAdjust="spacingAndGlyphs">AE22</text><rect x="317.5" y="386.0" width="25.9" height="4.8" rx="1" fill="#f9f07a" stroke="#a44c2e" stroke-width="1.1"/><text x="326" y="389.9" font-size="4.0" fill="#8a5a20" stroke="#8a5a20" stroke-width="0.12" text-anchor="middle" font-weight="normal" >XXX</text><text x="346" y="390.0" font-size="4.2" fill="#3444bc" stroke="#3444bc" stroke-width="0.12" text-anchor="start" font-weight="normal" textLength="8" lengthAdjust="spacingAndGlyphs">AF23</text><rect x="317.5" y="394.8" width="25.9" height="4.8" rx="1" fill="#f9f07a" stroke="#a44c2e" stroke-width="1.1"/><text x="326" y="398.7" font-size="4.0" fill="#8a5a20" stroke="#8a5a20" stroke-width="0.12" text-anchor="middle" font-weight="normal" >XXX</text><text x="349.5" y="398.8" font-size="4.2" fill="#3444bc" stroke="#3444bc" stroke-width="0.12" text-anchor="start" font-weight="normal" textLength="8" lengthAdjust="spacingAndGlyphs">AE22</text><text x="240.8" y="77.2" font-size="4.4" fill="#b84a4a" stroke="#b84a4a" stroke-width="0.12" text-anchor="middle" font-weight="normal" textLength="7" lengthAdjust="spacingAndGlyphs">VCC</text><polyline points="241.2,78 241.2,82.5" fill="none" stroke="#b84a4a" stroke-width="1.1" stroke-linejoin="miter" stroke-linecap="square"/>
</svg>
<!-- vertical scrollbar -->
<div class="abs" style="left:730px;top:19px;width:10px;height:406px;background:#efefef;border-left:1px solid #e4e4e4;box-sizing:border-box;"></div>
<div class="abs" style="left:730.6px;top:133.2px;width:8.8px;height:197.5px;box-sizing:border-box;border:1px solid #b8b8b8;border-radius:2px;background:linear-gradient(90deg,#fafafa,#dcdce0 55%,#c6c6ca);"></div>
<div class="abs" style="left:732.5px;top:226px;width:4px;height:4px;border-top:1px solid #8a8a8a;border-bottom:1px solid #8a8a8a;"></div>
<div class="abs" style="left:732.5px;top:228px;width:4px;height:0;border-top:1px solid #8a8a8a;"></div>
<!-- horizontal scrollbar -->
<div class="abs" style="left:1px;top:425.3px;width:729px;height:9.4px;background:#ececec;border-bottom:1px solid #d8d8d8;box-sizing:content-box;"></div>
<div class="abs" style="left:155.4px;top:426px;width:465px;height:8.6px;box-sizing:border-box;border:1px solid #b8b8b8;border-radius:2px;background:linear-gradient(#f8f8f8,#d8d8dc 55%,#c4c4c8);"></div>
<div class="abs" style="left:730px;top:425px;width:10px;height:10px;background:#eeeeee;"></div>
<svg class="abs" style="left:0;top:0" width="750" height="453" viewBox="0 0 750 453">
<path d="M733.2,26 L735,24 L736.8,26 Z" fill="#2a2a2a" stroke="#2a2a2a" stroke-width="0.5"/>
<path d="M733.2,418.3 L735,420.3 L736.8,418.3 Z" fill="#2a2a2a" stroke="#2a2a2a" stroke-width="0.5"/>
<path d="M7,428.2 L5,430 L7,431.8 Z" fill="#2a2a2a" stroke="#2a2a2a" stroke-width="0.5"/>
<path d="M723,428.2 L725,430 L723,431.8 Z" fill="#2a2a2a" stroke="#2a2a2a" stroke-width="0.5"/>
</svg>
<!-- tab bar -->
<div class="abs" style="left:0;top:435px;width:740px;height:15px;background:#f0f0f0;border-top:1px solid #d0d0d0;box-sizing:border-box;"></div>
<svg class="abs" style="left:0;top:435px" width="740" height="15" viewBox="0 0 740 15" font-family="Liberation Sans, sans-serif">
<path d="M5.3,0 L9,12 L33.6,12 L36.3,0" fill="#ffffff" stroke="#8c8c8c" stroke-width="0.8"/>
<path d="M37.5,0.8 L34.5,12 L62.5,12 L66.5,0.8 Z" fill="#fbfbfb" stroke="#a8a8a8" stroke-width="0.8"/>
<text x="10" y="9.3" font-size="8.2" font-weight="bold" fill="#111" textLength="20.3" lengthAdjust="spacingAndGlyphs">Editor</text>
<text x="39" y="9.3" font-size="8.2" fill="#8a8a8a" textLength="20.7" lengthAdjust="spacingAndGlyphs">matrice</text>
<rect x="636.5" y="0.5" width="19" height="12.5" fill="#f3f3f3" stroke="#d6d6d6" stroke-width="1"/>
<rect x="656.5" y="0.5" width="21.5" height="12.5" fill="#f3f3f3" stroke="#d6d6d6" stroke-width="1"/>
<rect x="678.5" y="0.5" width="39" height="12.5" fill="#f3f3f3" stroke="#d6d6d6" stroke-width="1"/>
<rect x="717.5" y="0.5" width="22" height="12.5" fill="#f3f3f3" stroke="#d6d6d6" stroke-width="1"/>
<path d="M644.5,8 L650,2.5 L652.2,4.7 L646.7,10.2 L644,10.6 Z" fill="#d8d8e8" stroke="#505070" stroke-width="0.7"/>
<rect x="642" y="11.5" width="4" height="1.8" fill="#3050e0"/><rect x="648" y="11.5" width="4" height="1.8" fill="#3050e0"/>
<circle cx="661.2" cy="4.6" r="1.5" fill="#e8d020" stroke="#707020" stroke-width="0.5"/>
<circle cx="661.2" cy="9.4" r="1.5" fill="#e8d020" stroke="#707020" stroke-width="0.5"/>
<path d="M665.5,4 L668.5,7 L665.5,10 Z" fill="#404040"/>
<path d="M669.5,4.2 L676,4.2 L673.4,7.2 L673.4,10 L672.1,10 L672.1,7.2 Z" fill="none" stroke="#3a5a5a" stroke-width="0.9"/>
<text x="680.9" y="9.6" font-size="8.6" fill="#6e6e6e" textLength="33.9" lengthAdjust="spacingAndGlyphs">Mask Level</text>
<text x="721.5" y="9.6" font-size="8.6" fill="#6e6e6e" textLength="15" lengthAdjust="spacingAndGlyphs">Clear</text>
</svg>
<div class="abs" style="left:0;top:449.7px;width:750px;height:3.3px;background:#c6d2de;"></div>
<!-- right panel -->
<svg class="abs" style="left:740px;top:0" width="10" height="453" viewBox="740 0 10 453" font-family="Liberation Sans, sans-serif">
<defs><linearGradient id="pg" x1="0" y1="0" x2="0" y2="1"><stop offset="0" stop-color="#e6e6e6"/><stop offset="1" stop-color="#cdcac4"/></linearGradient></defs>
<rect x="740" y="0" width="10" height="273" fill="url(#pg)"/>
<rect x="740" y="273" width="10" height="159" fill="#b8b4ac"/>
<rect x="740" y="432" width="10" height="18" fill="#ececec"/>
<rect x="740" y="0" width="1.2" height="450" fill="#c2c2c2"/>
<rect x="741.2" y="0" width="8.8" height="9" fill="#d6e0ec"/>
<text x="741.8" y="7.8" font-size="8" font-weight="bold" fill="#4a5670" stroke="#4a5670" stroke-width="0.1">Li</text>
<rect x="747.5" y="15" width="4" height="14" rx="1.5" fill="#ffffff" stroke="#a8a8a8" stroke-width="0.8"/>
<rect x="747.5" y="34" width="4" height="13" rx="1.5" fill="#ffffff" stroke="#a8a8a8" stroke-width="0.8"/>
<rect x="747.5" y="51.3" width="4" height="13.3" rx="1.5" fill="#ffffff" stroke="#a8a8a8" stroke-width="0.8"/>
<rect x="747.5" y="69" width="4" height="11" rx="1.5" fill="#ffffff" stroke="#a8a8a8" stroke-width="0.8"/>
<rect x="747.5" y="80" width="3" height="193" fill="#f2f2f2"/>
<rect x="747.3" y="80" width="0.8" height="193" fill="#b4b4b4"/>
<rect x="747" y="272" width="4" height="7" fill="#ffffff"/>
<rect x="747.5" y="294" width="3" height="137" fill="#fffff0"/>
<rect x="747.3" y="294" width="0.8" height="137" fill="#8c8a84"/>
<path d="M744,437 L748,449" stroke="#707070" stroke-width="0.8"/>
<rect x="740" y="449.7" width="10" height="3.3" fill="#c6d2de"/>
</svg>
<div class="abs" style="left:0;top:19px;width:1px;height:431px;background:#b8b8b8;"></div>
</body></html>
